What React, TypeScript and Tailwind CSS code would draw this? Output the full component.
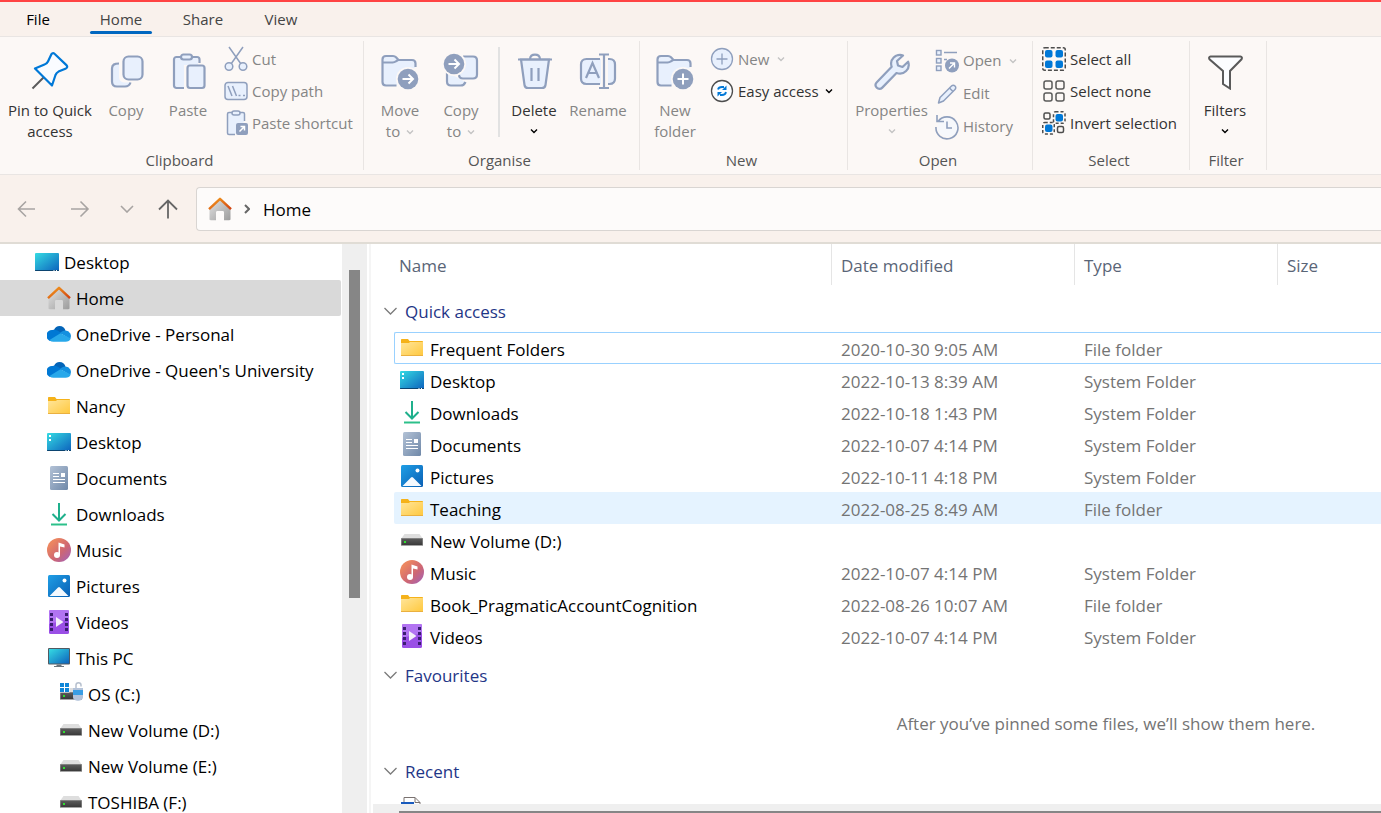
import React, { useState } from 'react';

type IconProps = { className?: string };

const STEEL = '#8f9fbd';
const TINT = '#e8f0fd';

/* ---------- ribbon icons ---------- */

const PinIcon = () => (
  <svg width="38" height="38" viewBox="0 0 38 38" fill="none">
    <path d="M12.500 25.500 1.500 36.500" stroke="#5a5a5a" strokeWidth="2" />
    <path
      d="M24 2.200c-1-1.300-2.600-1.500-3.600 0L17 9.500c-.8 1.700-1.800 2.500-3.500 3L4 16.500l17 17 3.500-10.500c.6-1.600 1.400-2.500 3-3.400l7.500-3.200c1.500-.8 1.600-2.100.4-3.300z"
      fill="#fafcff"
      stroke="#0078d7"
      strokeWidth="2.200"
      strokeLinejoin="round"
    />
  </svg>
);

const CopyIcon = () => (
  <svg width="38" height="38" viewBox="0 0 38 38" fill="none" stroke={STEEL} strokeWidth="2.200">
    <path d="M12 11.500H9c-2.500.3-4 2-4 5v13c0 3.500 1.500 5 5 5h8c3 0 5-1 6-4h-5c-5 0-7-2-7-6z" fill={TINT} stroke="none" />
    <path d="M12 11.500c-4.500 0-7 1-7 5v13c0 3.300 1.700 5 5 5h8c2.500 0 4.500-1 5.500-4" />
    <rect x="16.500" y="4.500" width="19" height="23" rx="5" fill={TINT} />
  </svg>
);

const PasteIcon = () => (
  <svg width="38" height="38" viewBox="0 0 38 38" fill="none" stroke={STEEL} strokeWidth="2.200">
    <path d="M11 5H7.500C6 5 5 6 5 7.500v26C5 35 6 36 7.500 36H15V13h14V7.500C29 6 28 5 26.500 5H23" fill={TINT} stroke="none" />
    <path d="M15 36H7.500C6 36 5 35 5 33.500v-26C5 6 6 5 7.500 5H12M23 5h5c1.500 0 2.500 1 2.500 2.500V11" />
    <rect x="12" y="2.500" width="11" height="5" rx="2.500" fill={TINT} />
    <rect x="18.500" y="13.500" width="17" height="22.500" rx="2.500" fill={TINT} />
  </svg>
);

const FolderBase = () => (
  <>
    <path
      d="M15.500 33.500H5c-2 0-3.500-1.500-3.500-3.500V7.500C1.500 5.500 3 4 5 4h7c1.300 0 2.200.4 3 1.300L17.500 8H31c2.200 0 3.500 1.300 3.500 3.500V15"
      fill={TINT}
      stroke={STEEL}
      strokeWidth="2.200"
    />
    <path d="M2 10.500h9.500c1.500 0 2.500-.3 3.500-1.200L17 8" stroke={STEEL} strokeWidth="2.200" />
    <path d="M15 32.500 33 13v8z" fill={TINT} />
    <circle cx="27" cy="27" r="12" fill="#fcf8f6" />
    <circle cx="27" cy="27" r="10.300" fill={STEEL} />
  </>
);

const MoveToIcon = () => (
  <svg width="38" height="38" viewBox="0 0 38 38" fill="none">
    <FolderBase />
    <path d="M21.500 27H32M27.500 22.500 32 27l-4.500 4.500" stroke="#fff" strokeWidth="2" />
  </svg>
);

const NewFolderIcon = () => (
  <svg width="38" height="38" viewBox="0 0 38 38" fill="none">
    <FolderBase />
    <path d="M21.500 27h11M27 21.500v11" stroke="#fff" strokeWidth="2" />
  </svg>
);

const CopyToIcon = () => (
  <svg width="38" height="38" viewBox="0 0 38 38" fill="none">
    <path d="M5 20v9.500c0 2.500 1.500 4 4 4h9.500c2.500 0 4-1 5-3.500" fill={TINT} stroke={STEEL} strokeWidth="2.200" />
    <path d="M21 4.500h10c2.500 0 4 1.500 4 4v14c0 2.500-1.500 4-4 4H21c-2.500 0-4-1.500-4-4" fill={TINT} stroke={STEEL} strokeWidth="2.200" />
    <circle cx="12" cy="12" r="12" fill="#fcf8f6" />
    <circle cx="12" cy="12" r="10.300" fill={STEEL} />
    <path d="M6.500 12H17M12.500 7.500 17 12l-4.500 4.500" stroke="#fff" strokeWidth="2" />
  </svg>
);

const DeleteIcon = () => (
  <svg width="38" height="38" viewBox="0 0 38 38" fill="none" stroke={STEEL} strokeWidth="2.200">
    <path d="M6 7.500 9.500 33c.3 2 1.500 3 3.500 3h14c2 0 3.200-1 3.500-3L34 7.500z" fill={TINT} />
    <path d="M3 7.500h34M15 7c.3-3 2-4.300 5-4.300S24.700 4 25 7M16.500 16v13M23.500 16v13" />
  </svg>
);

const RenameIcon = () => (
  <svg width="38" height="38" viewBox="0 0 38 38" fill="none" stroke={STEEL} strokeWidth="2.200">
    <path d="M22 7H7.500C4 7 2 9 2 12.500v14C2 30 4 32 7.500 32H22zM29 7h1.500C34 7 36 9 36 12.500v14c0 3.500-2 5.500-5.500 5.500H29z" fill={TINT} stroke="none" />
    <path d="M21 7H7.500C4 7 2 9 2 12.500v14C2 30 4 32 7.500 32H21M29 7h1.500C34 7 36 9 36 12.500v14c0 3.500-2 5.500-5.500 5.500H29" />
    <path d="m7 26 6.500-15L20 26M9.500 21h8M20 2.500h10M20 36h10M25 2.500V36" />
  </svg>
);

const PropertiesIcon = () => (
  <svg width="38" height="38" viewBox="0 0 38 38" fill="none">
    <path
      d="M30 3.500c-3-1.200-7-.4-9.300 2-2.500 2.500-3.200 6-2 9.300L3.800 30.200c-1.600 1.700-1.500 4 0 5.500s3.900 1.500 5.500-.1L23.500 21c3.500 1.200 7 .6 9.600-2 2.500-2.500 3.200-6.200 2-9.300L29.500 15 25 13.500 24 9z"
      fill={TINT}
      stroke={STEEL}
      strokeWidth="2.200"
      strokeLinejoin="round"
    />
  </svg>
);

const FiltersIcon = () => (
  <svg width="38" height="38" viewBox="0 0 38 38" fill="none">
    <path
      d="M4.500 4.500h30c1.300 0 1.800 1.500 1 2.800L24 19v17.500L17 32V19L3.500 7.300c-.8-1.300-.3-2.800 1-2.800z"
      fill="#fcfdff"
      stroke="#5a5a5a"
      strokeWidth="2"
    />
  </svg>
);

const CutIcon = () => (
  <svg width="24" height="26" viewBox="0 0 24 26" fill="none" stroke={STEEL} strokeWidth="1.500">
    <path d="M5 1l12 17M19 1 7 18" />
    <circle cx="5" cy="20.500" r="3.800" fill={TINT} />
    <circle cx="19" cy="20.500" r="3.800" fill={TINT} />
  </svg>
);

const CopyPathIcon = () => (
  <svg width="24" height="26" viewBox="0 0 24 26" fill="none" stroke={STEEL} strokeWidth="1.500">
    <rect x="1" y="4.500" width="22" height="17" rx="3" fill={TINT} />
    <path d="m4 8 4 10M8.500 8l4 10M14.500 17.500h2M19 17.500h2" />
  </svg>
);

const PasteShortcutIcon = () => (
  <svg width="24" height="26" viewBox="0 0 24 26" fill="none" stroke={STEEL} strokeWidth="1.500">
    <path d="M11 24.500H5c-1 0-1.500-.5-1.500-1.500V4c0-1 .5-1.500 1.500-1.500h14c1 0 1.500.5 1.500 1.500v7" fill={TINT} />
    <rect x="8" y="1" width="8" height="4" rx="2" fill={TINT} />
    <rect x="12" y="13" width="12" height="12" rx="2" fill={STEEL} stroke="none" />
    <path d="m15.500 21.500 5-5M16.500 16.500h4v4" stroke="#fff" />
  </svg>
);

const NewItemIcon = () => (
  <svg width="24" height="24" viewBox="0 0 24 24" fill="none" stroke={STEEL} strokeWidth="1.300">
    <circle cx="12" cy="12" r="10.500" fill={TINT} />
    <path d="M6.500 12h11M12 6.500v11" />
  </svg>
);

const EasyAccessIcon = () => (
  <svg width="24" height="24" viewBox="0 0 24 24" fill="none">
    <circle cx="12" cy="12" r="10.500" fill="#fbfdff" stroke="#4d4d4d" strokeWidth="1.300" />
    <path d="M8 10.500C8.500 8.500 10 8 12 8h2M16 13c-.5 2.500-2 3-4 3h-2" stroke="#0078d7" strokeWidth="1.800" />
    <path d="M16.500 6.500V11H12zM7.500 17.500V13H12z" fill="#0078d7" />
  </svg>
);

const OpenIcon = () => (
  <svg width="24" height="24" viewBox="0 0 24 24" fill="none" stroke={STEEL} strokeWidth="1.400">
    <rect x="1.500" y="1.500" width="4.500" height="4.500" fill={TINT} />
    <rect x="1.500" y="9.500" width="4.500" height="4.500" fill={TINT} />
    <rect x="1.500" y="17" width="4.500" height="4.500" fill={TINT} />
    <path d="M9 3.500h13M9 10.500h3" />
    <circle cx="17" cy="16.500" r="7" fill={STEEL} stroke="none" />
    <path d="m14 19.500 5.500-5.500M15 14h4.500v4.500" stroke="#fff" />
  </svg>
);

const EditIcon = () => (
  <svg width="24" height="24" viewBox="0 0 24 24" fill="none" stroke={STEEL} strokeWidth="1.500" strokeLinejoin="round">
    <path d="m3.500 21 1.500-5.500L16.500 4c1-1 2.500-1 3.500 0s1 2.500 0 3.500L8.500 19z" fill={TINT} />
    <path d="m14.500 6 3.500 3.500" />
  </svg>
);

const HistoryIcon = () => (
  <svg className="shrink-0" width="26" height="26" viewBox="0 0 26 26" fill="none" stroke={STEEL} strokeWidth="1.600">
    <circle cx="13.500" cy="13" r="10" fill="#f6f8fc" stroke="none" />
    <path d="M4 7.500A11 11 0 1 1 2 13M3 1v6.500h7M13 7.500V14h5" />
  </svg>
);

const SelectAllIcon = () => (
  <svg width="24" height="24" viewBox="0 0 24 24" fill="none">
    <rect x=".75" y=".75" width="22.500" height="22.500" rx="2" stroke="#4d4d4d" strokeWidth="1.500" strokeDasharray="4 2" />
    {[3, 13.500].map((x) =>
      [3, 13.500].map((y) => <rect key={`${x}-${y}`} x={x} y={y} width="7.500" height="7.500" rx="2" fill="#0078d7" />)
    )}
  </svg>
);

const SelectNoneIcon = () => (
  <svg width="24" height="24" viewBox="0 0 24 24" fill="none">
    {[2, 14].map((x) =>
      [2, 14].map((y) => (
        <rect key={`${x}-${y}`} x={x} y={y} width="8" height="8" rx="2" stroke="#5a5a5a" strokeWidth="1.500" />
      ))
    )}
  </svg>
);

const InvertIcon = () => (
  <svg width="24" height="24" viewBox="0 0 24 24" fill="none" stroke="#4d4d4d" strokeWidth="1.500">
    <rect x="2" y="2" width="6" height="6" rx="1.500" />
    <rect x="15.500" y="15.500" width="6" height="6" rx="1.500" />
    <rect x="11.500" y=".75" width="11.500" height="11.500" rx="2" strokeDasharray="3 2" />
    <rect x=".75" y="11.500" width="11.500" height="11.500" rx="2" strokeDasharray="3 2" />
    <rect x="13.500" y="3" width="7.500" height="7.500" rx="2" fill="#0078d7" stroke="none" />
    <rect x="3" y="13.500" width="7.500" height="7.500" rx="2" fill="#0078d7" stroke="none" />
  </svg>
);

const Caret = ({ className }: IconProps) => (
  <svg className={className} width="8" height="6" viewBox="0 0 8 6" fill="none" stroke="currentColor" strokeWidth="1.400">
    <path d="m1 1.500 3 3 3-3" />
  </svg>
);

/* ---------- file icons, all on a 24px box ---------- */

const HomeIcon = () => (
  <svg width="24" height="24" viewBox="0 0 24 24" fill="none">
    <defs>
      <linearGradient id="homeWall" x1="0" y1="0" x2="1" y2="1">
        <stop offset="0" stopColor="#e3e3e3" />
        <stop offset="1" stopColor="#9c9c9c" />
      </linearGradient>
      <linearGradient id="homeRoof" x1="0" y1="0" x2="1" y2="1">
        <stop offset="0" stopColor="#f5a020" />
        <stop offset="1" stopColor="#d04010" />
      </linearGradient>
    </defs>
    <path d="M12 2.500 1.500 12.500V22c0 .8.500 1.200 1.200 1.200H8V15.500c0-1 .5-1.500 1.500-1.500h5c1 0 1.500.5 1.500 1.500v7.700h5.300c.7 0 1.200-.4 1.200-1.200v-9.500z" fill="url(#homeWall)" />
    <path d="M1 12.200 12 1.800l11 10.400" stroke="url(#homeRoof)" strokeWidth="2.400" strokeLinejoin="round" />
  </svg>
);

const CloudIcon = () => (
  <svg width="24" height="24" viewBox="0 0 24 24">
    <path d="M7 8c1-2.500 3-4 5.500-4 3 0 5.300 1.800 6 4.600L12 14z" fill="#0364b8" />
    <path d="M5.500 8C8 7.200 10 8 12 9.500l3 2L4.500 19.200A5.600 5.600 0 0 1 5.500 8z" fill="#0078d4" />
    <path d="M18.500 8.500A5.500 5.500 0 0 1 23 17l-10-6c1.500-1.500 3-2.500 5.500-2.500z" fill="#1490df" />
    <path d="M13.500 11.200 2.500 18c1 1.200 2 1.700 3.500 1.700h12.500c2.500 0 4.500-1 5.200-3.200z" fill="#28a8ea" />
  </svg>
);

const FolderIcon = () => (
  <svg width="24" height="24" viewBox="0 0 24 24">
    <defs>
      <linearGradient id="folderFace" x1="0" y1="0" x2="1" y2="1">
        <stop offset="0" stopColor="#ffe59a" />
        <stop offset="1" stopColor="#ffc83d" />
      </linearGradient>
    </defs>
    <path d="M1 4c0-.6.400-1 1-1h6l1.500 2H22c.6 0 1 .4 1 1v13H1z" fill="#f5b21a" />
    <path d="M1 7h8l1-1h13v13c0 .6-.4 1-1 1H2c-.6 0-1-.4-1-1z" fill="url(#folderFace)" />
    <path d="M1 19.500h22" stroke="#eab040" />
  </svg>
);

const DesktopIcon = ({ plain = false }: { plain?: boolean }) => (
  <svg width="24" height="24" viewBox="0 0 24 24">
    <defs>
      <linearGradient id="deskFace" x1="0" y1="0" x2="1" y2="1">
        <stop offset="0" stopColor="#35dbe3" />
        <stop offset="1" stopColor="#0d62bd" />
      </linearGradient>
    </defs>
    <rect y="3" width="24" height="18" rx="1" fill="url(#deskFace)" />
    <path d="M0 20h24v.5c0 .3-.2.500-.5.500H.5c-.3 0-.5-.2-.5-.5z" fill="#0b4470" />
    <path d="M18.500 20.500h1M21 20.500h1" stroke="#fff" />
    {!plain && <path d="M2 5h2v2H2zM2 9h2v2H2z" fill="#fff" />}
  </svg>
);

const DocumentsIcon = () => (
  <svg width="24" height="24" viewBox="0 0 24 24">
    <defs>
      <linearGradient id="docFace" x1="0" y1="0" x2="1" y2="1">
        <stop offset="0" stopColor="#b3c2d6" />
        <stop offset="1" stopColor="#6f88a8" />
      </linearGradient>
    </defs>
    <rect x="3" width="18" height="24" rx="1.500" fill="url(#docFace)" />
    <path d="M6 7.500h6M6 10.500h6M6 13.500h12M6 16.500h12" stroke="#fff" strokeWidth="1" />
    <rect x="14" y="7" width="4" height="4" fill="#fff" />
  </svg>
);

const DownloadsIcon = () => (
  <svg width="24" height="24" viewBox="0 0 24 24" fill="none" strokeWidth="2">
    <path d="M12 1v17M5.500 12l6.500 6.500 6.500-6.500" stroke="#1fb08c" />
    <path d="M4 22.500h16" stroke="#2cc08a" />
  </svg>
);

const MusicIcon = () => (
  <svg width="24" height="24" viewBox="0 0 24 24">
    <defs>
      <linearGradient id="musicFace" x1="0" y1="0" x2="1" y2="1">
        <stop offset="0.200" stopColor="#ec8660" />
        <stop offset="0.600" stopColor="#cd6674" />
        <stop offset="1" stopColor="#9f62bf" />
      </linearGradient>
    </defs>
    <circle cx="12" cy="12" r="12" fill="url(#musicFace)" />
    <circle cx="10" cy="17" r="3" fill="#fff" />
    <path d="M11.500 17V4.500l6 2V9.500l-4.500-1V17z" fill="#fff" />
  </svg>
);

const PicturesIcon = () => (
  <svg width="24" height="24" viewBox="0 0 24 24">
    <defs>
      <linearGradient id="picFace" x1="0" y1="0" x2="1" y2="1">
        <stop offset="0" stopColor="#1f9fe6" />
        <stop offset="1" stopColor="#0a5fb4" />
      </linearGradient>
    </defs>
    <rect x="1" y="1" width="22" height="22" rx="1.500" fill="url(#picFace)" />
    <path d="M2.500 22 11 13.500c.7-.7 1.400-.7 2 0L21.500 22z" fill="#f4f9fe" />
    <circle cx="17.500" cy="6.500" r="2" fill="#fff" />
  </svg>
);

const VideosIcon = () => (
  <svg width="24" height="24" viewBox="0 0 24 24">
    <rect x="2" width="20" height="24" rx="1.500" fill="#9a4fe6" />
    <path d="M2 1.500C2 .6 2.600 0 3.500 0h17c.9 0 1.500.6 1.500 1.500V9L2 14z" fill="#b274f2" />
    {[3, 8, 13, 18].map((y) => (
      <path key={y} d={`M3 ${y}h3v3H3zM18 ${y}h3v3h-3z`} fill="#3b1d72" />
    ))}
    <path d="m9 7 7.500 5L9 17z" fill="#f4effa" />
  </svg>
);

const PcIcon = () => (
  <svg width="24" height="24" viewBox="0 0 24 24">
    <rect x="1" y="2" width="22" height="16.500" rx="1" fill="#505a62" />
    <rect x="2" y="3" width="20" height="14.500" fill="url(#deskFace)" />
    <path d="M9.500 18.500h5V20H17v1H7v-1h2.500z" fill="#6b747c" />
  </svg>
);

const DriveBody = () => (
  <>
    <defs>
      <linearGradient id="driveFace" x1="0" y1="0" x2="0" y2="1">
        <stop offset="0" stopColor="#5c5c5c" />
        <stop offset="1" stopColor="#3a3a3a" />
      </linearGradient>
    </defs>
    <path d="M1 11 4.500 6h15L23 11z" fill="#dedede" />
    <rect x="1" y="10" width="22" height="8" fill="#a5a5a5" />
    <rect x="1.500" y="10.500" width="21" height="6.500" fill="url(#driveFace)" />
    <rect x="4" y="13" width="2" height="2" fill="#2fe02f" />
  </>
);

const DriveIcon = () => (
  <svg width="24" height="24" viewBox="0 0 24 24">
    <DriveBody />
  </svg>
);

const OsDriveIcon = () => (
  <svg width="24" height="24" viewBox="0 0 24 24">
    <DriveBody />
    <path d="M1 0h9.500v10.500H1z" fill="#fff" />
    <path d="M1 1h4v4H1zM6 1h4v4H6zM1 6h4v4H1zM6 6h4v4H6z" fill="#0f86d8" />
    <path d="M17 6V3c0-3 5-3 5 0v1.500" fill="none" stroke="#b6c0ce" strokeWidth="1.500" />
    <path d="M14 6h10v9c0 5-10 5-10 0z" fill="#b3c3da" />
    <rect x="14" y="8" width="10" height="5" fill="#3a9ee4" />
  </svg>
);

const WordIcon = () => (
  <svg width="24" height="24" viewBox="0 0 24 24" fill="none">
    <path d="M4 24V1.500h11l5 5V24M15 1.500v5h5" fill="#fff" stroke="#7a7270" />
    <rect x="1" y="6" width="13" height="12" fill="#185abd" />
  </svg>
);

/* ---------- data ---------- */

const treeItems = [
  { label: 'Desktop', icon: <DesktopIcon plain />, indent: 'pl-[35px]' },
  { label: 'Home', icon: <HomeIcon />, indent: 'pl-[47px]' },
  { label: 'OneDrive - Personal', icon: <CloudIcon />, indent: 'pl-[47px]' },
  { label: "OneDrive - Queen's University", icon: <CloudIcon />, indent: 'pl-[47px]' },
  { label: 'Nancy', icon: <FolderIcon />, indent: 'pl-[47px]' },
  { label: 'Desktop', icon: <DesktopIcon />, indent: 'pl-[47px]' },
  { label: 'Documents', icon: <DocumentsIcon />, indent: 'pl-[47px]' },
  { label: 'Downloads', icon: <DownloadsIcon />, indent: 'pl-[47px]' },
  { label: 'Music', icon: <MusicIcon />, indent: 'pl-[47px]' },
  { label: 'Pictures', icon: <PicturesIcon />, indent: 'pl-[47px]' },
  { label: 'Videos', icon: <VideosIcon />, indent: 'pl-[47px]' },
  { label: 'This PC', icon: <PcIcon />, indent: 'pl-[47px]' },
  { label: 'OS (C:)', icon: <OsDriveIcon />, indent: 'pl-[59px]' },
  { label: 'New Volume (D:)', icon: <DriveIcon />, indent: 'pl-[59px]' },
  { label: 'New Volume (E:)', icon: <DriveIcon />, indent: 'pl-[59px]' },
  { label: 'TOSHIBA (F:)', icon: <DriveIcon />, indent: 'pl-[59px]' },
];

const quickAccess = [
  { name: 'Frequent Folders', date: '2020-10-30 9:05 AM', type: 'File folder', icon: <FolderIcon /> },
  { name: 'Desktop', date: '2022-10-13 8:39 AM', type: 'System Folder', icon: <DesktopIcon /> },
  { name: 'Downloads', date: '2022-10-18 1:43 PM', type: 'System Folder', icon: <DownloadsIcon /> },
  { name: 'Documents', date: '2022-10-07 4:14 PM', type: 'System Folder', icon: <DocumentsIcon /> },
  { name: 'Pictures', date: '2022-10-11 4:18 PM', type: 'System Folder', icon: <PicturesIcon /> },
  { name: 'Teaching', date: '2022-08-25 8:49 AM', type: 'File folder', icon: <FolderIcon /> },
  { name: 'New Volume (D:)', date: '', type: '', icon: <DriveIcon /> },
  { name: 'Music', date: '2022-10-07 4:14 PM', type: 'System Folder', icon: <MusicIcon /> },
  { name: 'Book_PragmaticAccountCognition', date: '2022-08-26 10:07 AM', type: 'File folder', icon: <FolderIcon /> },
  { name: 'Videos', date: '2022-10-07 4:14 PM', type: 'System Folder', icon: <VideosIcon /> },
];

/* ---------- ribbon pieces ---------- */

interface BigButtonProps {
  icon: React.ReactNode;
  lines: string[];
  width: string;
  active?: boolean;
  caret?: 'inline' | 'below';
}

const BigButton: React.FC<BigButtonProps> = ({ icon, lines, width, active = false, caret }) => (
  <button className={`flex shrink-0 flex-col items-center pt-[11px] ${width} ${active ? 'text-[#333]' : 'text-[#858585]'}`}>
    {icon}
    <span className="mt-[10px] flex flex-col items-center leading-[21px] whitespace-nowrap">
      {lines.map((line, i) => (
        <span key={line} className="flex items-center gap-1.5">
          {line}
          {caret === 'inline' && i === lines.length - 1 && <Caret className="text-[#c4c4c4]" />}
        </span>
      ))}
      {caret === 'below' && <Caret className={active ? 'mt-[7px] text-black' : 'mt-[7px] text-[#c4c4c4]'} />}
    </span>
  </button>
);

interface SmallButtonProps {
  icon: React.ReactNode;
  label: string;
  active?: boolean;
  caret?: boolean;
  height?: string;
}

const SmallButton: React.FC<SmallButtonProps> = ({ icon, label, active = false, caret = false, height = 'h-8' }) => (
  <button className={`flex items-center gap-1 whitespace-nowrap ${height} ${active ? 'text-[#333]' : 'text-[#858585]'}`}>
    <span className="flex w-6 shrink-0 justify-center">{icon}</span>
    {label}
    {caret && <Caret className={active ? 'ml-0.5 text-black' : 'ml-1 text-[#c4c4c4]'} />}
  </button>
);

const RibbonGroup: React.FC<{ label: string; width: string; children: React.ReactNode }> = ({ label, width, children }) => (
  <section className={`my-1 flex shrink-0 flex-col border-r border-[#e9e5e3] ${width}`}>
    <div className="flex flex-1">{children}</div>
    <h2 className="pr-1 text-center leading-[20px] text-[#555]">{label}</h2>
  </section>
);

const GroupHeading: React.FC<{ label: string; className: string }> = ({ label, className }) => (
  <tr>
    <th colSpan={5} scope="colgroup" className={`p-0 text-left font-normal ${className}`}>
      <button className="flex items-center gap-2 pl-[13px] text-[#1f3687]">
        <svg width="13" height="10" viewBox="0 0 13 10" fill="none" stroke="#7b7b7b" strokeWidth="1.300">
          <path d="m.5 1 6 6 6-6" />
        </svg>
        {label}
      </button>
    </th>
  </tr>
);

export default function App() {
  const [current, setCurrent] = useState(1);

  return (
    <div className="flex h-screen flex-col overflow-hidden border-t-2 border-[#ff4343] bg-white font-['Open_Sans','Noto_Sans',sans-serif] text-[17px] text-black">
      {/* Tabs */}
      <nav className="flex h-[35px] shrink-0 border-b border-[#e9e5e3] bg-[#f9f1ec] pl-2 text-[15px] text-[#444]">
        <button className="w-[60px] text-black">File</button>
        <button className="ml-[22px] flex w-[62px] flex-col items-center justify-end">
          <span className="leading-[23px]">Home</span>
          <span className="mb-[2px] h-[3px] w-full rounded-full bg-[#0067c0]" />
        </button>
        <button className="ml-5 w-[62px]">Share</button>
        <button className="ml-4 w-[62px]">View</button>
      </nav>

      {/* Ribbon */}
      <div className="flex h-[138px] shrink-0 border-b border-[#e9e5e3] bg-[#fcf8f6] text-[15px]">
        <RibbonGroup label="Clipboard" width="w-[364px]">
          <BigButton icon={<PinIcon />} lines={['Pin to Quick', 'access']} width="w-[100px]" active />
          <BigButton icon={<CopyIcon />} lines={['Copy']} width="w-[52px]" />
          <BigButton icon={<PasteIcon />} lines={['Paste']} width="w-[72px]" />
          <div className="pt-[2px]">
            <SmallButton icon={<CutIcon />} label="Cut" />
            <SmallButton icon={<CopyPathIcon />} label="Copy path" />
            <SmallButton icon={<PasteShortcutIcon />} label="Paste shortcut" />
          </div>
        </RibbonGroup>
        <RibbonGroup label="Organise" width="w-[276px]">
          <BigButton icon={<MoveToIcon />} lines={['Move', 'to']} width="w-[72px]" caret="inline" />
          <BigButton icon={<CopyToIcon />} lines={['Copy', 'to']} width="w-[50px]" caret="inline" />
          <span className="mt-[6px] ml-3 h-[90px] w-[2px] bg-[#e2e2e2]" />
          <BigButton icon={<DeleteIcon />} lines={['Delete']} width="w-[68px]" active caret="below" />
          <BigButton icon={<RenameIcon />} lines={['Rename']} width="w-[60px]" />
        </RibbonGroup>
        <RibbonGroup label="New" width="w-[208px]">
          <BigButton icon={<NewFolderIcon />} lines={['New', 'folder']} width="w-[70px]" />
          <div className="pt-[2px]">
            <SmallButton icon={<NewItemIcon />} label="New" caret />
            <SmallButton icon={<EasyAccessIcon />} label="Easy access" active caret />
          </div>
        </RibbonGroup>
        <RibbonGroup label="Open" width="w-[185px]">
          <BigButton icon={<PropertiesIcon />} lines={['Properties']} width="w-[87px]" caret="below" />
          <div className="pt-[3px]">
            <SmallButton icon={<OpenIcon />} label="Open" height="h-[33px]" caret />
            <SmallButton icon={<EditIcon />} label="Edit" height="h-[33px]" />
            <SmallButton icon={<HistoryIcon />} label="History" height="h-[33px]" />
          </div>
        </RibbonGroup>
        <RibbonGroup label="Select" width="w-[157px]">
          <div className="pt-[2px] pl-[9px]">
            <SmallButton icon={<SelectAllIcon />} label="Select all" active />
            <SmallButton icon={<SelectNoneIcon />} label="Select none" active />
            <SmallButton icon={<InvertIcon />} label="Invert selection" active />
          </div>
        </RibbonGroup>
        <RibbonGroup label="Filter" width="w-[77px]">
          <BigButton icon={<FiltersIcon />} lines={['Filters']} width="w-[70px]" active caret="below" />
        </RibbonGroup>
      </div>

      {/* Address bar */}
      <div className="flex h-[69px] shrink-0 items-center border-b-2 border-[#e0dcd5] bg-[#f9f1ec]">
        <button aria-label="Back" className="ml-[17px]">
          <svg width="20" height="18" viewBox="0 0 20 18" fill="none" stroke="#a8a4a2" strokeWidth="1.600">
            <path d="M18 9H1.500M9 1.500 1.500 9 9 16.500" />
          </svg>
        </button>
        <button aria-label="Forward" className="ml-[33px]">
          <svg width="20" height="18" viewBox="0 0 20 18" fill="none" stroke="#a8a4a2" strokeWidth="1.600">
            <path d="M1 9h17M10.500 1.500 18 9l-7.500 7.500" />
          </svg>
        </button>
        <button aria-label="Recent locations" className="ml-[30px]">
          <svg width="14" height="8" viewBox="0 0 14 8" fill="none" stroke="#a8a4a2" strokeWidth="1.600">
            <path d="m1 1 6 6 6-6" />
          </svg>
        </button>
        <button aria-label="Up" className="ml-6">
          <svg width="20" height="20" viewBox="0 0 20 20" fill="none" stroke="#666" strokeWidth="1.800">
            <path d="M10 19.500V2M1 10.500 10 1.500l9 9" />
          </svg>
        </button>
        <div className="ml-[18px] flex h-11 flex-1 items-center rounded-l border border-r-0 border-[#d9d5d2] bg-[#fdfbfa] pl-[11px]">
          <HomeIcon />
          <svg className="ml-3" width="6" height="10" viewBox="0 0 6 10" fill="none" stroke="#666" strokeWidth="2">
            <path d="m1 1 4 4-4 4" />
          </svg>
          <a href="#home" className="ml-[13px] pt-0.5">
            Home
          </a>
        </div>
      </div>

      <div className="flex min-h-0 flex-1">
        {/* Navigation tree */}
        <aside className="flex w-[371px] shrink-0 overflow-hidden border-r-2 border-[#f5f5f5]">
          <ul className="flex-1 overflow-hidden">
            {treeItems.map((item, index) => (
              <li key={index}>
                <button
                  onClick={() => setCurrent(index)}
                  className={`flex h-9 w-[341px] items-center gap-[5px] whitespace-nowrap ${item.indent} ${
                    current === index ? 'rounded-r-xs bg-[#d9d9d9]' : ''
                  }`}
                >
                  {item.icon}
                  <span className="pt-0.5">{item.label}</span>
                </button>
              </li>
            ))}
          </ul>
          <div className="mr-[2px] w-[25px] bg-[#efefef] pt-[26px] pl-[7px]">
            <div className="h-[328px] w-[11px] bg-[#868686]" />
          </div>
        </aside>

        {/* File list */}
        <main className="flex min-w-0 flex-1 flex-col">
          <div className="min-h-0 flex-1 overflow-hidden">
            <table className="w-full table-fixed border-separate border-spacing-0 whitespace-nowrap">
              <colgroup>
                <col className="w-[23px]" />
                <col className="w-[437px]" />
                <col className="w-[243px]" />
                <col className="w-[203px]" />
                <col />
              </colgroup>
              <thead>
                <tr className="h-[41px] text-left text-[#5a6577]">
                  <th className="p-0" />
                  <th className="p-0 pt-0.5 pl-[5px] font-normal">Name</th>
                  <th className="border-l border-[#e5e5e5] p-0 pt-0.5 pl-[9px] font-normal">Date modified</th>
                  <th className="border-l border-[#e5e5e5] p-0 pt-0.5 pl-[9px] font-normal">Type</th>
                  <th className="border-l border-[#e5e5e5] p-0 pt-0.5 pl-[9px] font-normal">Size</th>
                </tr>
              </thead>
              <tbody>
                <GroupHeading label="Quick access" className="h-[47px] pt-[6px]" />
                {quickAccess.map((row) => {
                  const focused = row.name === 'Frequent Folders';
                  const hovered = row.name === 'Teaching';
                  const cell = focused ? 'border-y border-[#99d1ff]' : hovered ? 'bg-[#e5f3ff]' : '';
                  return (
                    <tr key={row.name} className="h-8">
                      <td className="p-0" />
                      <td className={`rounded-l-xs p-0 ${focused ? 'border-l pl-[5px]' : 'pl-[6px]'} ${cell}`}>
                        <span className="flex items-center gap-[6px]">
                          {row.icon}
                          <span className="pt-[3px]">{row.name}</span>
                        </span>
                      </td>
                      <td className={`p-0 pt-[3px] pl-[10px] text-[#747474] ${cell}`}>{row.date}</td>
                      <td className={`p-0 pt-[3px] pl-[10px] text-[#747474] ${cell}`}>{row.type}</td>
                      <td className={`p-0 ${cell}`} />
                    </tr>
                  );
                })}
              </tbody>
              <tbody>
                <GroupHeading label="Favourites" className="h-12" />
                <tr className="h-12">
                  <td colSpan={2} />
                  <td colSpan={3} className="p-0 text-center text-[#747474]">
                    After you’ve pinned some files, we’ll show them here.
                  </td>
                </tr>
              </tbody>
              <tbody>
                <GroupHeading label="Recent" className="h-12" />
                <tr className="h-8">
                  <td className="p-0" />
                  <td className="p-0 pl-[6px] align-top">
                    <WordIcon />
                  </td>
                  <td colSpan={3} />
                </tr>
              </tbody>
            </table>
          </div>
          {/* Horizontal scrollbar */}
          <div className="ml-[2px] flex h-[9px] shrink-0 items-end bg-[#efefef] pl-[26px]">
            <div className="h-[2px] flex-1 bg-[#868686]" />
          </div>
        </main>
      </div>
    </div>
  );
}
